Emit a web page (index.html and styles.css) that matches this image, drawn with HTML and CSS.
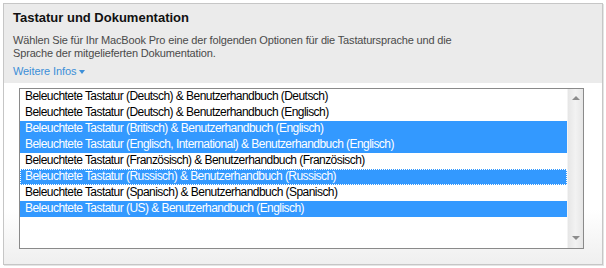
FILE: index.html
```html
<!DOCTYPE html>
<html lang="de">
<head>
<meta charset="utf-8">
<link rel="stylesheet" href="styles.css">
</head>
<body>
<div class="panel">
  <div class="head">
    <h1 class="title">Tastatur und Dokumentation</h1>
    <p class="desc">Wählen Sie für Ihr MacBook Pro eine der folgenden Optionen für die Tastatursprache und die<br>Sprache der mitgelieferten Dokumentation.</p>
    <a class="more">Weitere Infos <span class="caret"></span></a>
  </div>
  <div class="body">
    <div class="listbox">
      <ul class="items">
        <li class="item">Beleuchtete Tastatur (Deutsch) &amp; Benutzerhandbuch (Deutsch)</li>
        <li class="item">Beleuchtete Tastatur (Deutsch) &amp; Benutzerhandbuch (Englisch)</li>
        <li class="item sel">Beleuchtete Tastatur (Britisch) &amp; Benutzerhandbuch (Englisch)</li>
        <li class="item sel">Beleuchtete Tastatur (Englisch, International) &amp; Benutzerhandbuch (Englisch)</li>
        <li class="item">Beleuchtete Tastatur (Französisch) &amp; Benutzerhandbuch (Französisch)</li>
        <li class="item sel focus">Beleuchtete Tastatur (Russisch) &amp; Benutzerhandbuch (Russisch)</li>
        <li class="item">Beleuchtete Tastatur (Spanisch) &amp; Benutzerhandbuch (Spanisch)</li>
        <li class="item sel">Beleuchtete Tastatur (US) &amp; Benutzerhandbuch (Englisch)</li>
      </ul>
      <div class="scroll">
        <span class="arrow up"></span>
        <span class="arrow down"></span>
      </div>
    </div>
  </div>
</div>
</body>
</html>
```

FILE: styles.css
```css
html, body {
  margin: 0;
  padding: 0;
  background: #ffffff;
}
body {
  padding: 3px;
  font-family: "Liberation Sans", Arial, sans-serif;
}
.panel {
  width: 598px;
  height: 260px;
  border: 1px solid #c6c6c6;
  display: flex;
  flex-direction: column;
  box-shadow: 1px 1px 0 #e4e4e4;
}
.head {
  background: #ebebeb;
  height: 79px;
  padding: 0 0 0 9px;
  box-sizing: border-box;
}
.title {
  margin: 0;
  padding-top: 6px;
  font-size: 13px;
  line-height: 16px;
  font-weight: bold;
  color: #111;
}
.desc {
  margin: 8px 0 0 0;
  font-size: 11px;
  line-height: 13px;
  letter-spacing: -0.16px;
  color: #4a4a4a;
}
.more {
  display: inline-flex;
  align-items: center;
  gap: 3px;
  margin-top: 5px;
  font-size: 11px;
  line-height: 13px;
  letter-spacing: -0.1px;
  color: #3c8fd8;
}
.caret {
  width: 0;
  height: 0;
  border-left: 3.5px solid transparent;
  border-right: 3.5px solid transparent;
  border-top: 4px solid #3c8fd8;
}
.body {
  flex: 1;
  background: linear-gradient(#ffffff 0%, #ffffff 70%, #efefef 100%);
  padding: 5px 0 0 15px;
}
.listbox {
  width: 563px;
  height: 159px;
  border: 1px solid #8a8a8a;
  background: #fff;
  display: flex;
}
.items {
  list-style: none;
  margin: 0;
  padding: 0;
  flex: 1;
}
.item {
  height: 16px;
  line-height: 15px;
  font-size: 12px;
  letter-spacing: -0.55px;
  padding-left: 5px;
  color: #000;
  box-sizing: border-box;
  white-space: nowrap;
}
.item.sel {
  background: #3399ff;
  color: #fff;
}
.item.focus {
  outline: 1px dotted #ffffff;
  outline-offset: -1px;
}
.scroll {
  width: 16px;
  background: linear-gradient(90deg, #e6e6e6, #f2f2f2 50%, #e6e6e6);
  border-left: 1px solid #f4f4f4;
  display: flex;
  flex-direction: column;
  justify-content: space-between;
  align-items: center;
  padding: 7px 0 8px;
  box-sizing: border-box;
}
.arrow {
  width: 0;
  height: 0;
  border-left: 4px solid transparent;
  border-right: 4px solid transparent;
}
.arrow.up {
  border-bottom: 4px solid #8c8c8c;
}
.arrow.down {
  border-top: 4px solid #8c8c8c;
}
```
